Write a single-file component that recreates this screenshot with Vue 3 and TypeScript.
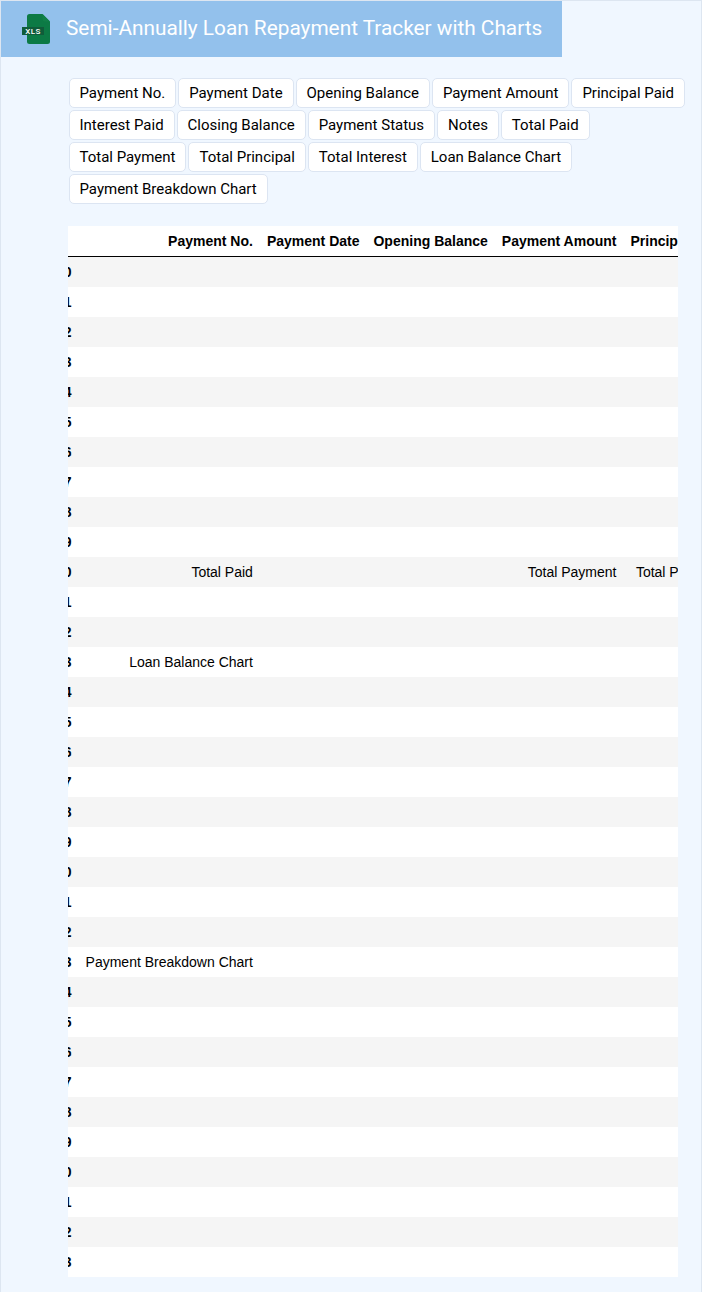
<script setup lang="ts">
import { onMounted, ref } from 'vue'

const columns: string[] = [
  'Payment No.', 'Payment Date', 'Opening Balance', 'Payment Amount', 'Principal Paid',
  'Interest Paid', 'Closing Balance', 'Payment Status', 'Notes', 'Total Paid',
  'Total Payment', 'Total Principal', 'Total Interest', 'Loan Balance Chart', 'Payment Breakdown Chart',
]

const special: Record<number, Record<number, string>> = {
  10: { 0: 'Total Paid', 3: 'Total Payment', 4: 'Total Principal', 5: 'Total Interest' },
  13: { 0: 'Loan Balance Chart' },
  23: { 0: 'Payment Breakdown Chart' },
}

const rows: number[] = Array.from({ length: 34 }, (_, i) => i)
const cell = (r: number, c: number): string => special[r]?.[c] ?? ''

const wrap = ref<HTMLElement | null>(null)
onMounted(() => {
  if (wrap.value) wrap.value.scrollLeft = 19
})
</script>

<template>
  <div class="page">
    <header class="banner">
      <svg class="logo" width="32" height="32" viewBox="0 0 32 32" aria-hidden="true">
        <path d="M8.500 1h13l7.500 7.500V28.500a2.500 2.500 0 0 1-2.500 2.500H8.500A2.500 2.500 0 0 1 6 28.500V3.500A2.500 2.500 0 0 1 8.500 1z" fill="#0c7a45" />
        <path d="M21.500 1v5a2.500 2.500 0 0 0 2.500 2.500h5z" fill="#118049" />
        <rect x="1" y="14" width="22" height="8" fill="#0f5c3a" />
        <text x="12" y="20.800" text-anchor="middle" class="logo-text">XLS</text>
      </svg>
      <h1 class="title">Semi-Annually Loan Repayment Tracker with Charts</h1>
    </header>

    <div class="chips">
      <button v-for="c in columns" :key="c" class="chip" type="button">{{ c }}</button>
    </div>

    <div ref="wrap" class="table-wrap">
      <table class="grid">
        <thead>
          <tr>
            <th></th>
            <th v-for="c in columns" :key="c">{{ c }}</th>
          </tr>
        </thead>
        <tbody>
          <tr v-for="r in rows" :key="r">
            <th>{{ r }}</th>
            <td v-for="(c, i) in columns" :key="c">{{ cell(r, i) }}</td>
          </tr>
        </tbody>
      </table>
    </div>
  </div>
</template>

<style>
html, body { margin: 0; padding: 0; background: #f0f7ff; }
</style>

<style scoped>
.page {
  box-sizing: border-box;
  width: 702px;
  min-height: 1292px;
  background: #f0f7ff;
  border: 1px solid #dde6f1;
  border-bottom: 0;
  font-family: Roboto, sans-serif;
}
.banner {
  display: flex;
  align-items: center;
  gap: 13px;
  width: 561px;
  height: 56px;
  padding-left: 20px;
  box-sizing: border-box;
  background: #93c1ec;
}
.logo { flex: none; }
.logo-text {
  font-family: Roboto, sans-serif;
  font-size: 8px;
  font-weight: 500;
  fill: #fff;
  letter-spacing: 0.5px;
}
.title {
  margin: 0 0 2px;
  font-size: 20.8px;
  font-weight: 400;
  color: #fff;
  white-space: nowrap;
}
.chips {
  display: flex;
  flex-wrap: wrap;
  gap: 2px;
  width: 618px;
  margin: 21px 0 0 67.5px;
}
.chip {
  box-sizing: border-box;
  height: 30px;
  padding: 0 9.98px;
  border: 1px solid #dce5f2;
  border-radius: 5px;
  background: #fff;
  color: #000;
  font-family: Roboto, sans-serif;
  font-size: 15px;
}
.table-wrap {
  width: 610px;
  margin: 22px 0 0 67px;
  overflow: hidden;
}
.grid {
  border-collapse: separate;
  border-spacing: 0;
  border: 0;
  font-family: "Liberation Sans", Arial, sans-serif;
  font-size: 14px;
  color: #000;
  background: #fff;
}
.grid th, .grid td {
  padding: 0 7px;
  height: 30px;
  text-align: right;
  white-space: nowrap;
  box-sizing: border-box;
  border: 0;
}
.grid thead th {
  height: 31px;
  font-weight: 700;
  border-bottom: 1px solid #000;
}
.grid tbody tr:nth-child(odd) { background: #f5f5f5; }
.grid tbody tr:nth-child(even) { background: #fff; }
.grid tbody th { font-weight: 700; }
</style>
